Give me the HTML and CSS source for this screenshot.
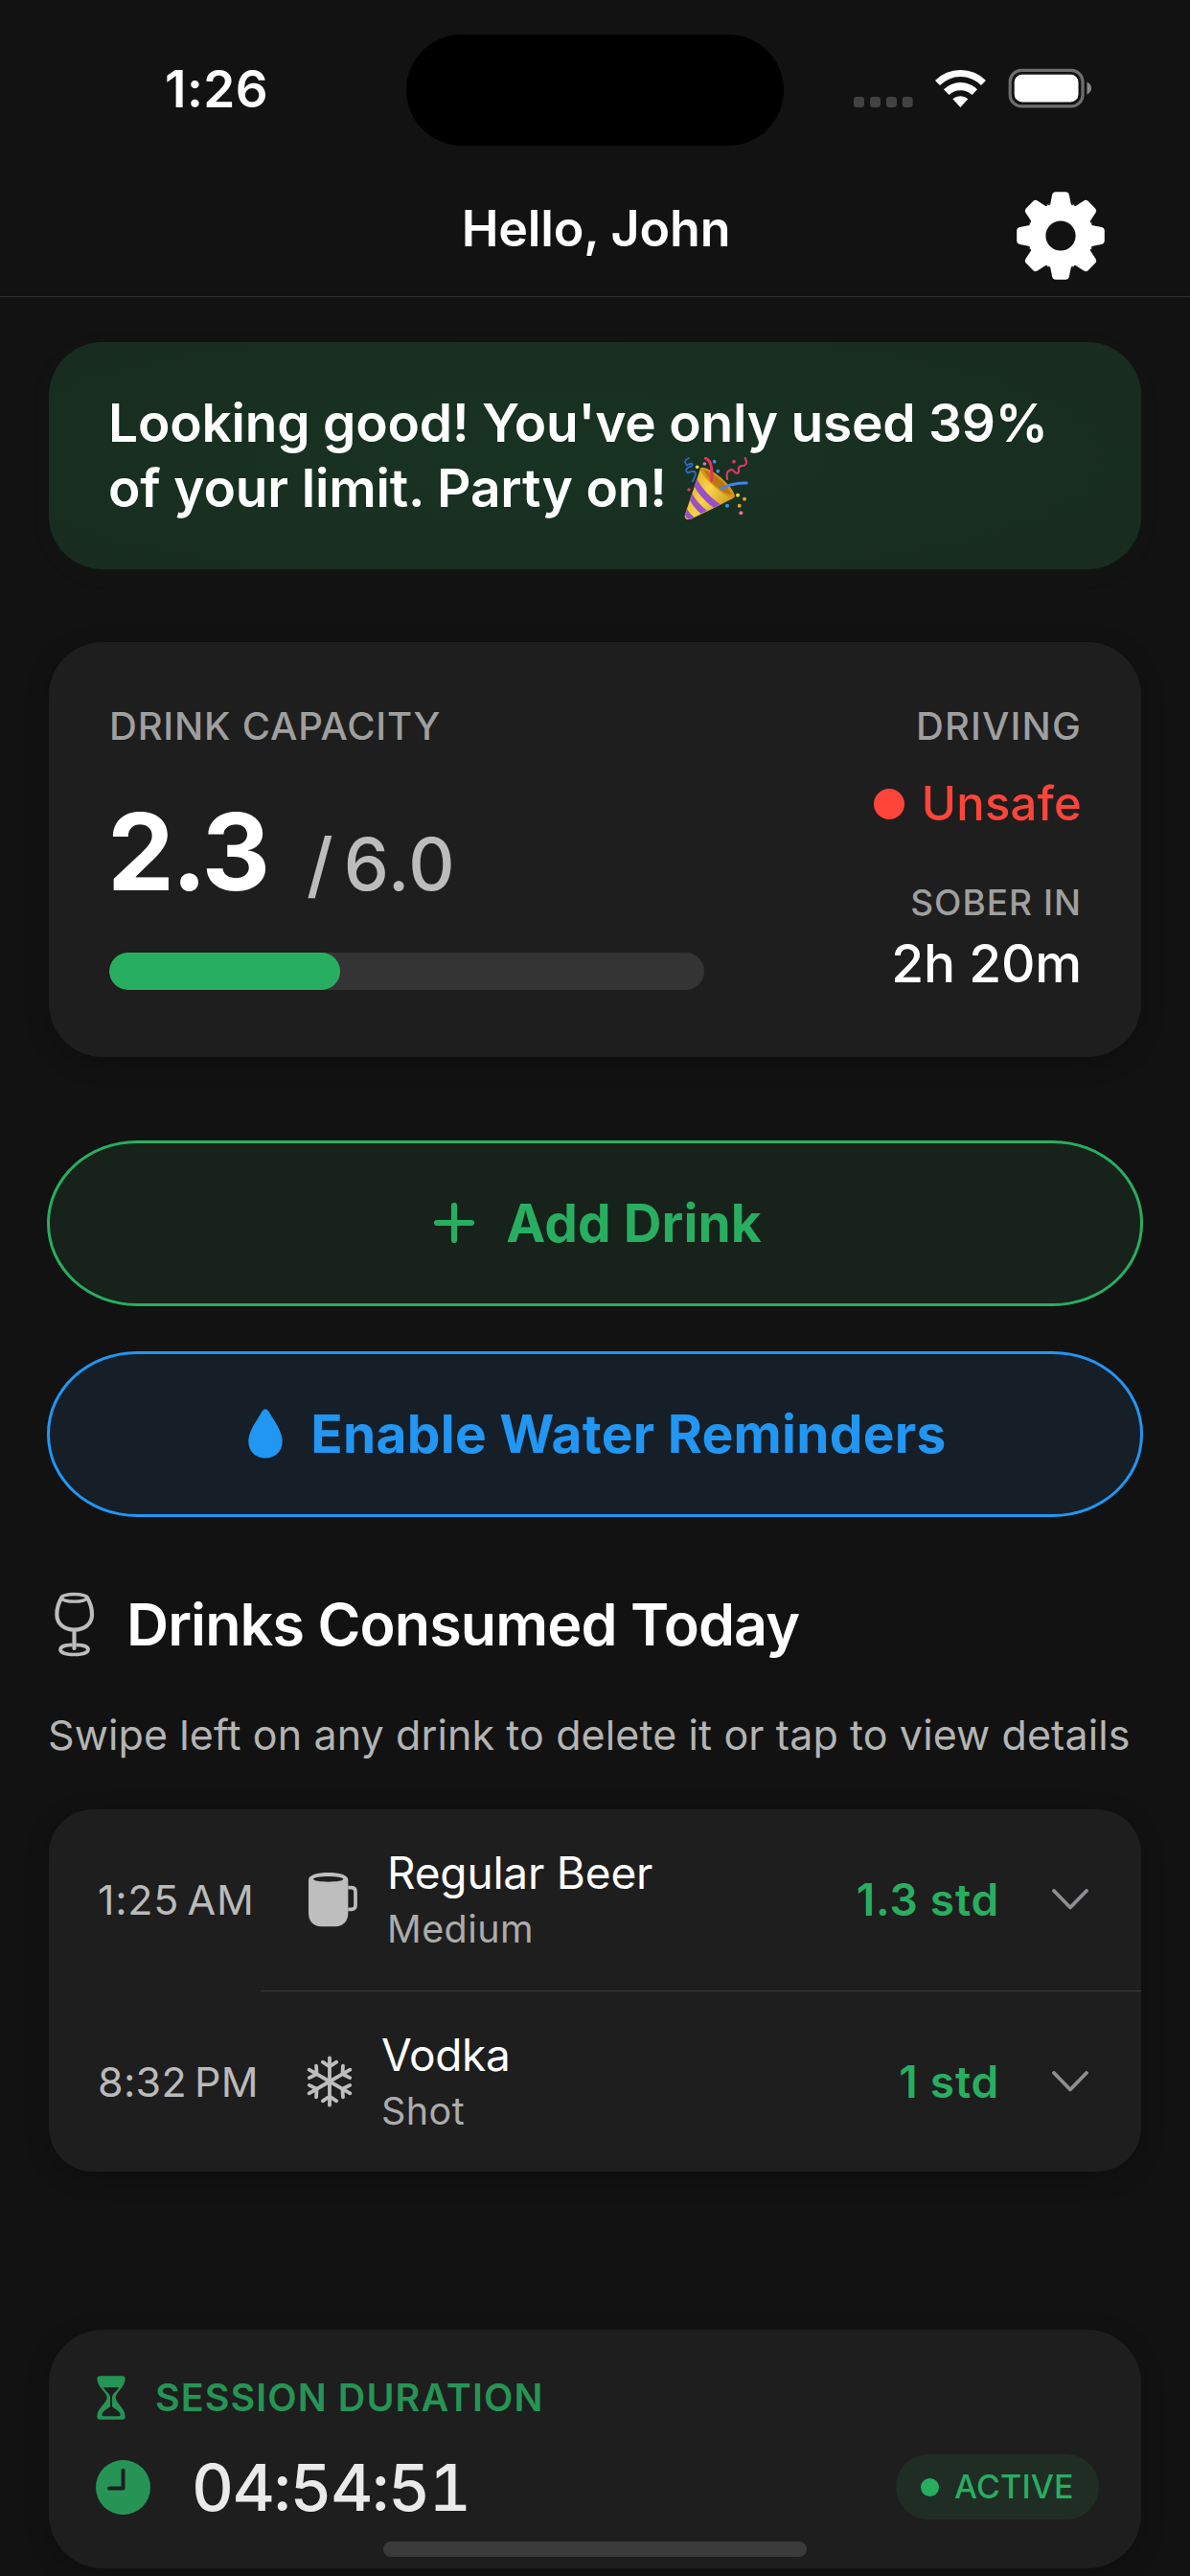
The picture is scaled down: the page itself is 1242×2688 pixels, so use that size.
FILE: index.html
```html
<!DOCTYPE html>
<html lang="en">
<head>
<meta charset="utf-8">
<title>Drink Tracker</title>
<link rel="stylesheet" href="styles.css">
</head>
<body>
<header class="header">
  <div class="status">
    <span class="status-time">1:26</span>
    <span class="island"></span>
    <svg class="status-icons" width="250" height="42" viewBox="0 0 250 42">
      <g fill="#424242"><rect x="0" y="30" width="11" height="11" rx="3.2"/><rect x="17" y="30" width="11" height="11" rx="3.2"/><rect x="34" y="30" width="11" height="11" rx="3.2"/><rect x="50.7" y="30" width="11" height="11" rx="3.2"/></g>
      <g fill="#fff" transform="translate(-31 -31) scale(.33333)">
        <path d="M348 132A112 112 0 0 1 507 132L492 147A91 91 0 0 0 363 147Z"/>
        <path d="M375 160A74 74 0 0 1 480 160L464 177A54 54 0 0 0 391 177Z"/>
        <path d="M403 190A36 36 0 0 1 451 190L427 216Z"/>
      </g>
      <rect x="163.2" y="2.3" width="75.8" height="37.6" rx="12" fill="none" stroke="#6d6d6d" stroke-width="3.2"/>
      <rect x="167.7" y="6.8" width="66.8" height="28.6" rx="8" fill="#fff"/>
      <path d="M243.5 14.5c6 2.500 6 10.500 0 13z" fill="#8a8a8a"/>
    </svg>
  </div>
  <div class="navbar">
    <h1 class="title">Hello, John</h1>
    <svg class="gear" width="92" height="92" viewBox="-46 -46 92 92">
      <defs><path id="tooth" d="M-15 -33Q-11.500 -30.500 -10.700 -33.500L-8.900 -42.500Q-8.200 -45.800 -5 -45.800H5Q8.200 -45.800 8.900 -42.500L10.700 -33.500Q11.500 -30.500 15 -33L0 -20Z"/></defs>
      <g fill="#fff"><path fill-rule="evenodd" d="M-33.500 0a33.500 33.500 0 1 0 67 0a33.500 33.500 0 1 0 -67 0ZM-15.600 0a15.600 15.600 0 1 1 31.200 0a15.600 15.600 0 1 1 -31.200 0Z"/>
      <use href="#tooth"/><use href="#tooth" transform="rotate(45)"/><use href="#tooth" transform="rotate(90)"/><use href="#tooth" transform="rotate(135)"/><use href="#tooth" transform="rotate(180)"/><use href="#tooth" transform="rotate(225)"/><use href="#tooth" transform="rotate(270)"/><use href="#tooth" transform="rotate(315)"/></g>
    </svg>
  </div>
</header>

<main class="main">
  <section class="card notice">
    <p class="notice-text"><span class="line-a">Looking good! You've only used 39%</span><br><span class="line-b">of your limit. Party on!</span>
      <svg class="popper" width="68" height="66" viewBox="70 52 200 198">
        <defs><linearGradient id="cone" x1="0" y1="0.2" x2="1" y2="0.800"><stop offset="0" stop-color="#e0a01c"/><stop offset=".45" stop-color="#f7d548"/><stop offset="1" stop-color="#c98a14"/></linearGradient></defs>
        <path d="M122 88Q98 160 73 234Q72 249 90 247Q160 215 226 180Z" fill="url(#cone)"/>
        <path d="M111 121Q135 165 184 200L164 211Q122 180 103 144ZM96 166Q112 196 143 219L124 229Q102 212 89 186ZM80 213Q88 230 103 239L90 247Q76 246 74 232Z" fill="#9a4fc9"/>
        <path d="M121 86Q138 76 186 116Q237 162 228 179Q214 186 166 145Q122 106 121 86Z" fill="#d9921c"/>
        <path d="M133 91Q158 98 190 128Q214 152 219 170Q196 168 168 140Q139 110 133 91Z" fill="#b9780f"/>
        <path d="M138 56Q162 62 157 126" fill="none" stroke="#e8305c" stroke-width="9" stroke-linecap="round"/>
        <path d="M187 151Q220 132 267 133" fill="none" stroke="#4285e8" stroke-width="9" stroke-linecap="round"/>
        <path d="M86 55Q66 64 80 77Q101 66 95 80Q68 88 82 101Q112 90 106 109Q103 116 98 128" fill="none" stroke="#2f68cc" stroke-width="5.500" stroke-linecap="round"/>
        <path d="M262 55Q272 74 258 79Q240 78 242 91Q244 106 231 101Q222 86 212 95Q202 99 206 121" fill="none" stroke="#dc3a66" stroke-width="6.500" stroke-linecap="round"/>
        <g fill="#3c92e8"><circle cx="166" cy="66" r="5.500"/><circle cx="177" cy="96" r="5.500"/><circle cx="206" cy="204" r="6"/></g>
        <g fill="#e8dc3c"><circle cx="112" cy="83" r="5.500"/><circle cx="239" cy="171" r="6"/></g>
        <g fill="#e874a4"><circle cx="135" cy="73" r="5.500"/><circle cx="249" cy="227" r="6"/></g>
        <g fill="#d43c64"><circle cx="227" cy="66" r="5.500"/><circle cx="86" cy="154" r="5.500"/></g>
        <g fill="#e89c38"><circle cx="260" cy="183" r="6"/><circle cx="244" cy="204" r="6"/></g>
      </svg></p>
  </section>

  <section class="card summary">
    <div class="capacity">
      <h2 class="label">DRINK CAPACITY</h2>
      <div class="amount"><span class="used">2.3</span><span class="limit">/ 6.0</span></div>
      <div class="bar"><div class="bar-fill" style="width:38.8%"></div></div>
    </div>
    <div class="driving">
      <h2 class="label driving-label">DRIVING</h2>
      <div class="unsafe"><span class="unsafe-dot"></span>Unsafe</div>
      <h2 class="sober-label">SOBER IN</h2>
      <div class="sober">2h 20m</div>
    </div>
  </section>

  <button class="btn btn-add">
    <svg width="42" height="42" viewBox="0 0 42 42"><path d="M21 3v36M3 21h36" stroke="#28ae60" stroke-width="6.200" stroke-linecap="round"/></svg>
    <span>Add Drink</span>
  </button>
  <button class="btn btn-water">
    <svg width="36" height="52" viewBox="0 0 36 52"><path d="M18 0.500C20 0.500 21.500 2.500 22.500 4.500C28 14 35.700 24 35.700 34C35.700 44.500 28 51.500 18 51.500S0.300 44.500 0.300 34C0.300 24 8 14 13.500 4.500C14.500 2.500 16 0.500 18 0.500Z" fill="#2196f3"/></svg>
    <span>Enable Water Reminders</span>
  </button>

  <div class="section-head">
    <svg class="glass" width="42" height="68" viewBox="53 66 126 202" fill="none" stroke="#bdbdbd" stroke-width="12.500">
      <ellipse cx="114.500" cy="84" rx="40" ry="11.500" stroke-width="10"/>
      <path d="M76 82C66 98 60 118 60 136C60 166 84 184 115 184S170 166 170 136C170 118 164 98 154 82" stroke-linecap="round"/>
      <path d="M114.500 186V242" stroke-linecap="round"/>
      <path d="M109 231C86 231 71 237 71 246C71 256 90 261.500 114.500 261.500S158 256 158 246C158 237 143 231 120 231" stroke-width="11"/>
    </svg>
    <h2 class="section-title">Drinks Consumed Today</h2>
  </div>
  <p class="hint">Swipe left on any drink to delete it or tap to view details</p>

  <section class="card list">
    <div class="row">
      <span class="time">1:25&#8239;AM</span>
      <svg class="mug" width="51" height="57" viewBox="96 73 153 171">
        <path fill-rule="evenodd" fill="#bebebe" d="M96 96C96 80 124 73 158 73S220 80 220 96V200C220 226 204 242 180 242H136C112 242 96 226 96 200ZM111 93.500C111 98.500 132 102 158 102S205 98.500 205 93.500S184 85 158 85S111 88.500 111 93.500Z"/>
        <path d="M220 120H230Q243 120 243 133V175Q243 188 230 188H220" fill="none" stroke="#bebebe" stroke-width="11"/>
      </svg>
      <div class="info"><div class="name">Regular Beer</div><div class="size">Medium</div></div>
      <span class="std">1.3 std</span>
      <svg class="chevron" width="38" height="22" viewBox="0 0 38 22"><path d="M2 2L19 19.500L36 2" fill="none" stroke="#8e8e93" stroke-width="3.800" stroke-linecap="round" stroke-linejoin="round"/></svg>
    </div>
    <div class="divider"></div>
    <div class="row">
      <span class="time time-pm">8:32&#8239;PM</span>
      <svg class="snow" width="48" height="54" viewBox="-24 -27 48 54">
        <defs><path id="arm" d="M0 0V-24.700M-7.200 -20.300L0 -15.500L7.200 -20.300"/></defs>
        <g fill="none" stroke="#bebebe" stroke-width="3.800" stroke-linecap="round"><use href="#arm"/><use href="#arm" transform="rotate(60)"/><use href="#arm" transform="rotate(120)"/><use href="#arm" transform="rotate(180)"/><use href="#arm" transform="rotate(240)"/><use href="#arm" transform="rotate(300)"/></g>
      </svg>
      <div class="info"><div class="name name-vodka">Vodka</div><div class="size">Shot</div></div>
      <span class="std">1 std</span>
      <svg class="chevron" width="38" height="22" viewBox="0 0 38 22"><path d="M2 2L19 19.500L36 2" fill="none" stroke="#8e8e93" stroke-width="3.800" stroke-linecap="round" stroke-linejoin="round"/></svg>
    </div>
  </section>

  <section class="card session">
    <div class="session-head">
      <svg class="hourglass" width="30" height="46" viewBox="62 86 90 138">
        <path fill-rule="evenodd" fill="#269455" d="M72 87H142Q151 87 151 96C151 122 121 138 121 154.500S151 188 151 214Q151 223 142 223H72Q63 223 63 214C63 188 94 171 94 154.500S63 122 63 96Q63 87 72 87ZM83 123C89 136 104 142 104 154.500V182C98 190 79 196 78 208Q78 213 83 213H131Q136 213 136 208C135 196 116 190 110 182V154.500C110 142 125 136 131 123Z"/>
      </svg>
      <h2 class="session-label">SESSION DURATION</h2>
    </div>
    <div class="session-body">
      <svg class="clock" width="57" height="57" viewBox="0 0 57 57"><circle cx="28.500" cy="28.500" r="28.500" fill="#269455"/><path d="M28.500 10.800V29.500H14" fill="none" stroke="#1e1e1e" stroke-width="4" stroke-linecap="round" stroke-linejoin="round"/></svg>
      <span class="timer">04:54:51</span>
      <span class="pill"><span class="pill-dot"></span>ACTIVE</span>
    </div>
  </section>
</main>
<div class="home-indicator"></div>
</body>
</html>
```
FILE: styles.css
```css
* { box-sizing: border-box; }
body {
  position: relative;
  margin: 0;
  width: 1242px;
  height: 2688px;
  overflow: hidden;
  background: #121212;
  color: #fff;
  font-family: Inter, "Liberation Sans", sans-serif;
}
h1, h2, p { margin: 0; font-weight: 500; }
svg { display: block; flex: none; }

.header { height: 310px; border-bottom: 1px solid #2f2f2f; }
.status {
  display: grid;
  grid-template-columns: 424px 394px 1fr;
  align-items: center;
  height: 187px;
}
.status-time { padding-left: 172px; margin-top: -2px; font-size: 53px; font-weight: 600; line-height: 64px; letter-spacing: .5px; }
.island { height: 116px; border-radius: 58px; background: #000; }
.status-icons { margin: -3px 0 0 73px; }
.navbar {
  display: grid;
  grid-template-columns: 1fr auto 1fr;
  height: 121px;
  padding-top: 13px;
}
.title { grid-column: 2; margin: 7px 0 0 2px; font-size: 52px; font-weight: 600; line-height: 64px; letter-spacing: -.17px; }
.gear { justify-self: end; margin-right: 89px; }

.main { display: flex; flex-direction: column; padding: 47px 51px 0; }
.card { background: #1e1e1e; border-radius: 56px; box-shadow: 0 6px 24px rgba(0, 0, 0, .25); }

.notice {
  height: 237px;
  padding: 50px 40px 0 62px;
  background: radial-gradient(ellipse 55% 60% at 45% 50%, #183323, #182d20);
  box-shadow: 0 6px 30px rgba(40, 174, 96, .03);
}
.notice-text { font-size: 55px; font-weight: 600; line-height: 68px; white-space: nowrap; }
.line-a { letter-spacing: -.2px; }
.line-b { letter-spacing: -.15px; }
.popper { display: inline-block; vertical-align: -13px; margin: -10px 0 -1px 3px; }

.summary { display: flex; justify-content: space-between; height: 433px; margin-top: 76px; padding: 64px 62px 0 63px; }
.capacity { width: 621px; }
.label { font-size: 40px; line-height: 48px; letter-spacing: .78px; color: #9f9f9f; }
.driving-label { letter-spacing: 1.13px; }
.amount { display: flex; align-items: baseline; gap: 41px; height: 112px; margin-top: 51px; line-height: 112px; }
.used { margin-left: -2px; font-size: 111px; font-weight: 700; letter-spacing: -3px; }
.limit { font-size: 75px; font-weight: 450; color: #bcbcbc; letter-spacing: 1px; word-spacing: -11px; }
.bar { height: 39px; margin-top: 49px; border-radius: 20px; background: #343434; overflow: hidden; }
.bar-fill { height: 100%; border-radius: 20px; background: #28ae60; }
.driving { display: flex; flex-direction: column; align-items: flex-end; }
.unsafe { display: flex; align-items: center; gap: 18px; margin-top: 27px; font-size: 49px; font-weight: 450; line-height: 60px; letter-spacing: .2px; color: #ff453a; }
.unsafe-dot { width: 32px; height: 32px; border-radius: 50%; background: #ff453a; }
.sober-label { margin-top: 51px; font-size: 37px; line-height: 44px; letter-spacing: 1px; color: #9f9f9f; }
.sober { margin-top: 9px; font-size: 55px; font-weight: 500; line-height: 64px; letter-spacing: -.2px; }

.btn {
  display: flex;
  align-items: center;
  justify-content: center;
  height: 173px;
  margin: 0 -2px;
  padding: 0;
  border: 3px solid;
  border-radius: 94px / 86px;
  font: 700 55px/66px Inter, "Liberation Sans", sans-serif;
}
.btn-add { gap: 33px; margin-top: 87px; padding: 0 0 1px 6px; border-color: #28ae60; background: #17221b; color: #28ae60; letter-spacing: .08px; }
.btn-water { gap: 29px; margin-top: 47px; padding: 0 0 1px 5px; border-color: #2196f3; background: #161f28; color: #2196f3; letter-spacing: .3px; }

.section-head { display: flex; align-items: center; gap: 33px; height: 76px; margin-top: 74px; padding-left: 6px; }
.section-title { font-size: 61px; font-weight: 600; line-height: 76px; letter-spacing: -.9px; }
.hint { margin: 49px 0 0 -1px; font-size: 43px; line-height: 56px; letter-spacing: .1px; font-weight: 400; color: #b4b4b4; white-space: nowrap; }

.list { margin-top: 50px; height: 378px; border-radius: 46px; }
.row { display: flex; align-items: center; height: 188px; padding: 0 55px 0 51px; }
.time { width: 207px; font-size: 43px; line-height: 56px; letter-spacing: .7px; color: #bababa; }
.time-pm { letter-spacing: .3px; }
.mug { margin: 0 31px 0 13px; }
.snow { margin: 0 30px 0 11px; }
.info { flex: 1; display: flex; flex-direction: column; gap: 6px; }
.name { font-size: 46px; line-height: 56px; letter-spacing: -.19px; }
.name-vodka { letter-spacing: -.35px; }
.size { font-size: 39.5px; line-height: 50px; letter-spacing: .45px; color: #acacac; }
.std { font-size: 46px; font-weight: 600; line-height: 56px; letter-spacing: .8px; color: #28ae60; }
.chevron { margin-left: 55px; }
.divider { height: 1px; margin: 1px 0 0 221px; background: #3b3b3b; }

.session { height: 249px; margin-top: 165px; padding: 46px 44px 0 50px; }
.session-head { display: flex; align-items: center; gap: 31px; height: 50px; }
.session-label { font-size: 39.5px; font-weight: 600; line-height: 50px; letter-spacing: 1.08px; color: #269455; }
.session-body { display: flex; align-items: center; height: 68px; margin-top: 34px; }
.clock { margin-left: -1px; }
.timer { margin-left: 43px; font-size: 68px; font-weight: 450; line-height: 68px; letter-spacing: -1.3px; font-variant-numeric: tabular-nums; color: #eaeaea; }
.pill { display: flex; align-items: center; gap: 16px; width: 212px; height: 68px; margin-left: auto; padding-left: 26px; border-radius: 34px; background: #202d25; font-size: 34px; font-weight: 500; line-height: 44px; letter-spacing: .13px; color: #28ae60; }
.pill-dot { width: 19px; height: 19px; border-radius: 50%; background: #28ae60; }

.home-indicator { position: absolute; left: 400px; top: 2652px; width: 442px; height: 16px; border-radius: 8px; background: #3b3b3b; }
```
